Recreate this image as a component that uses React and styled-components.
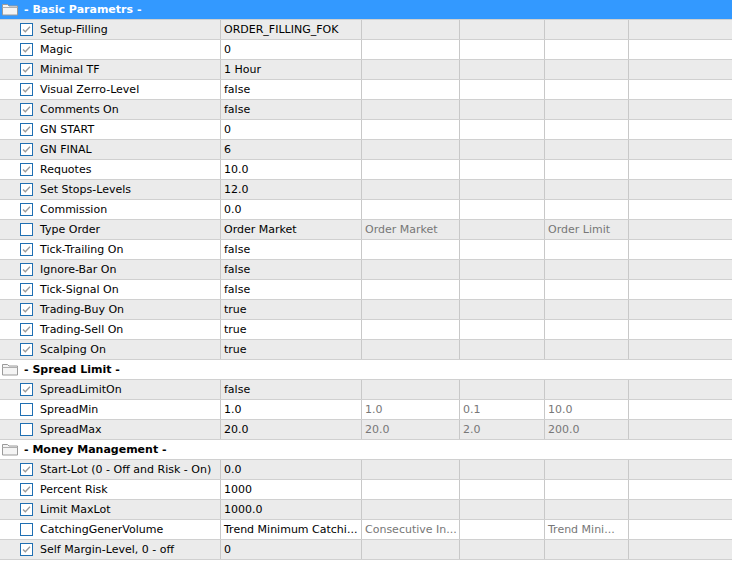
import React from "react";
import styled, { createGlobalStyle } from "styled-components";

const G = createGlobalStyle`
  body{margin:0;background:#fff;font-family:Tahoma,"DejaVu Sans",sans-serif;font-size:11px;color:#000;}
`;
const Table = styled.div`width:732px;`;
const Row = styled.div`
  display:grid;grid-template-columns:221px 141px 98px 85px 84px 1fr;
  height:20px;box-sizing:border-box;border-bottom:1px solid #d0d0d0;
  background:${p => (p.$alt ? "#ebebeb" : "#fff")};
`;
const Cell = styled.div`
  display:flex;align-items:center;padding-left:${p => p.$pl || 3}px;
  border-right:${p => (p.$last ? "none" : "1px solid #c8c8c8")};
  color:${p => (p.$muted ? "#777" : "#000")};white-space:nowrap;overflow:hidden;
`;
const Header = styled.div`
  height:20px;box-sizing:border-box;display:flex;align-items:center;gap:6px;padding-left:2px;
  font-weight:bold;border-bottom:1px solid #d0d0d0;
  background:${p => (p.$sel ? "#3399ff" : "#fff")};color:${p => (p.$sel ? "#fff" : "#000")};
`;
const Box = styled.span`
  width:11px;height:11px;border:1px solid #1f6fb2;background:#fff;margin:0 7px 0 17px;flex:none;
  display:flex;align-items:center;justify-content:center;
`;
const Folder = () => (
  <svg width="16" height="13" viewBox="0 0 16 13">
    <path d="M0.5 1.5h5l1.5 1.5h8.5v9h-15z" fill="#f4f4f4" stroke="#9a9a9a" />
    <path d="M0.5 4.5h15" stroke="#b0b0b0" />
  </svg>
);
const Check = () => (
  <svg width="9" height="9" viewBox="0 0 9 9"><path d="M1 4.5l2.3 2.3L8 1.8" fill="none" stroke="#9a9a9a" strokeWidth="1.3" /></svg>
);

const groups = [
  ["- Basic Parametrs -", true, [
    ["Setup-Filling", 1, "ORDER_FILLING_FOK"], ["Magic", 1, "0"], ["Minimal TF", 1, "1 Hour"],
    ["Visual Zerro-Level", 1, "false"], ["Comments On", 1, "false"], ["GN START", 1, "0"],
    ["GN FINAL", 1, "6"], ["Requotes", 1, "10.0"], ["Set Stops-Levels", 1, "12.0"],
    ["Commission", 1, "0.0"], ["Type Order", 0, "Order Market", "Order Market", "", "Order Limit"],
    ["Tick-Trailing On", 1, "false"], ["Ignore-Bar On", 1, "false"], ["Tick-Signal On", 1, "false"],
    ["Trading-Buy On", 1, "true"], ["Trading-Sell On", 1, "true"], ["Scalping On", 1, "true"]]],
  ["- Spread Limit -", false, [
    ["SpreadLimitOn", 1, "false"], ["SpreadMin", 0, "1.0", "1.0", "0.1", "10.0"],
    ["SpreadMax", 0, "20.0", "20.0", "2.0", "200.0"]]],
  ["- Money Management -", false, [
    ["Start-Lot (0 - Off and Risk - On)", 1, "0.0"], ["Percent Risk", 1, "1000"],
    ["Limit MaxLot", 1, "1000.0"], ["CatchingGenerVolume", 0, "Trend Minimum Catchi...", "Consecutive In...", "", "Trend Mini..."],
    ["Self Margin-Level, 0 - off", 1, "0"]]],
];

export default function App() {
  return (
    <Table>
      <G />
      {groups.map(([title, sel, rows]) => (
        <React.Fragment key={title}>
          <Header $sel={sel}><Folder />{title}</Header>
          {rows.map(([name, chk, v, a = "", b = "", c = ""], i) => (
            <Row key={name} $alt={i % 2 === 0}>
              <Cell $pl={0}><Box>{chk ? <Check /> : null}</Box>{name}</Cell>
              <Cell>{v}</Cell>
              <Cell $muted>{a}</Cell>
              <Cell $muted>{b}</Cell>
              <Cell $muted>{c}</Cell>
              <Cell $last />
            </Row>
          ))}
        </React.Fragment>
      ))}
    </Table>
  );
}
